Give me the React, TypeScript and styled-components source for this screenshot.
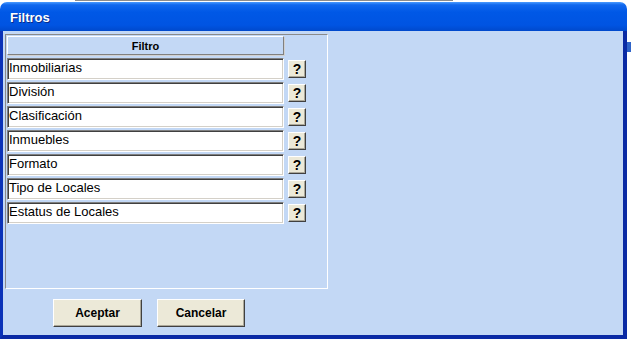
import { Fragment } from "react";
import styled, { createGlobalStyle } from "styled-components";

const GlobalStyle = createGlobalStyle`
  html, body {
    margin: 0;
    padding: 0;
    background: #ffffff;
  }
  * {
    box-sizing: border-box;
  }
`;

const Page = styled.div`
  width: 631px;
  height: 339px;
  overflow: hidden;
  background: #ffffff;
  display: flex;
  flex-direction: column;
  font-family: "Liberation Sans", Arial, sans-serif;
`;

const TopStrip = styled.div`
  height: 2px;
  flex-shrink: 0;
`;

const TopLine = styled.div`
  margin-left: 75px;
  width: 378px;
  height: 1px;
  background: #8c8c8c;
`;

const Desk = styled.div`
  display: flex;
  flex: 1;
  min-height: 0;
`;

const Window = styled.div`
  width: 627px;
  display: flex;
  flex-direction: column;
`;

const SideStrip = styled.div`
  flex: 1;
  padding-top: 40px;
`;

const BehindBit = styled.div`
  height: 10px;
  background: #2f64c8;
`;

const TitleBar = styled.div`
  height: 29px;
  flex-shrink: 0;
  border-radius: 7px 7px 0 0;
  background: linear-gradient(
    180deg,
    #4a9bff 0%,
    #1168ee 10%,
    #0058e6 35%,
    #0054e2 80%,
    #0049cc 100%
  );
  display: flex;
  align-items: center;
  padding: 2px 0 0 10px;
`;

const Title = styled.span`
  color: #ffffff;
  font-weight: bold;
  font-size: 13px;
  text-shadow: 1px 1px 0 #0a2c8a;
`;

const Body = styled.div`
  flex: 1;
  background: #c3d8f5;
  border-left: 3px solid #0a32b8;
  border-right: 4px solid #0a2aa4;
  border-bottom: 4px solid #0a2aa4;
  padding: 3px 0 0 2px;
  display: flex;
  flex-direction: column;
`;

const Panel = styled.div`
  width: 323px;
  height: 255px;
  border: 1px solid;
  border-color: #8a8a8a #ffffff #ffffff #8a8a8a;
  padding: 1px 0 0 1px;
`;

const Grid = styled.div`
  display: grid;
  grid-template-columns: 277px 18px;
  column-gap: 4px;
  row-gap: 2px;
  align-items: center;
`;

const HeaderCell = styled.div`
  height: 19px;
  margin-bottom: 1px;
  border: 1px solid;
  border-color: #ffffff #808080 #808080 #ffffff;
  box-shadow: 1px 1px 0 #d0d0d0;
  background: #c3d8f5;
  font-weight: bold;
  font-size: 11px;
  color: #000000;
  display: flex;
  align-items: center;
  justify-content: center;
`;

const Field = styled.div`
  height: 22px;
  background: #ffffff;
  border: 1px solid;
  border-color: #808080 #ffffff #ffffff #808080;
  box-shadow: inset 1px 1px 0 #404040, inset -1px -1px 0 #d4d0c8;
  padding: 1px 0 0 1px;
  font-size: 13px;
  line-height: 15px;
  color: #000000;
  white-space: nowrap;
`;

const HelpButton = styled.button`
  width: 18px;
  height: 18px;
  padding: 0;
  margin: 0;
  background: #ece9d8;
  border: 1px solid;
  border-color: #ffffff #404040 #404040 #ffffff;
  box-shadow: inset -1px -1px 0 #aca899;
  font-family: "Liberation Sans", Arial, sans-serif;
  font-weight: bold;
  font-size: 14px;
  line-height: 16px;
  color: #000000;
`;

const Actions = styled.div`
  display: flex;
  gap: 15px;
  padding-left: 48px;
  margin-top: 10px;
`;

const ActionButton = styled.button<{ $w: number }>`
  width: ${(p) => p.$w}px;
  height: 28px;
  padding: 0;
  background: #ece9d8;
  border: 1px solid;
  border-color: #ffffff #404040 #404040 #ffffff;
  box-shadow: inset -1px -1px 0 #aca899;
  font-family: "Liberation Sans", Arial, sans-serif;
  font-weight: bold;
  font-size: 12px;
  color: #000000;
`;

const filtros = [
  "Inmobiliarias",
  "División",
  "Clasificación",
  "Inmuebles",
  "Formato",
  "Tipo de Locales",
  "Estatus de Locales",
];

function App() {
  return (
    <>
      <GlobalStyle />
      <Page>
        <TopStrip>
          <TopLine />
        </TopStrip>
        <Desk>
          <Window>
            <TitleBar>
              <Title>Filtros</Title>
            </TitleBar>
            <Body>
              <Panel>
                <Grid>
                  <HeaderCell>Filtro</HeaderCell>
                  <span />
                  {filtros.map((f) => (
                    <Fragment key={f}>
                      <Field>{f}</Field>
                      <HelpButton>?</HelpButton>
                    </Fragment>
                  ))}
                </Grid>
              </Panel>
              <Actions>
                <ActionButton $w={89}>Aceptar</ActionButton>
                <ActionButton $w={88}>Cancelar</ActionButton>
              </Actions>
            </Body>
          </Window>
          <SideStrip>
            <BehindBit />
          </SideStrip>
        </Desk>
      </Page>
    </>
  );
}

export default App;
